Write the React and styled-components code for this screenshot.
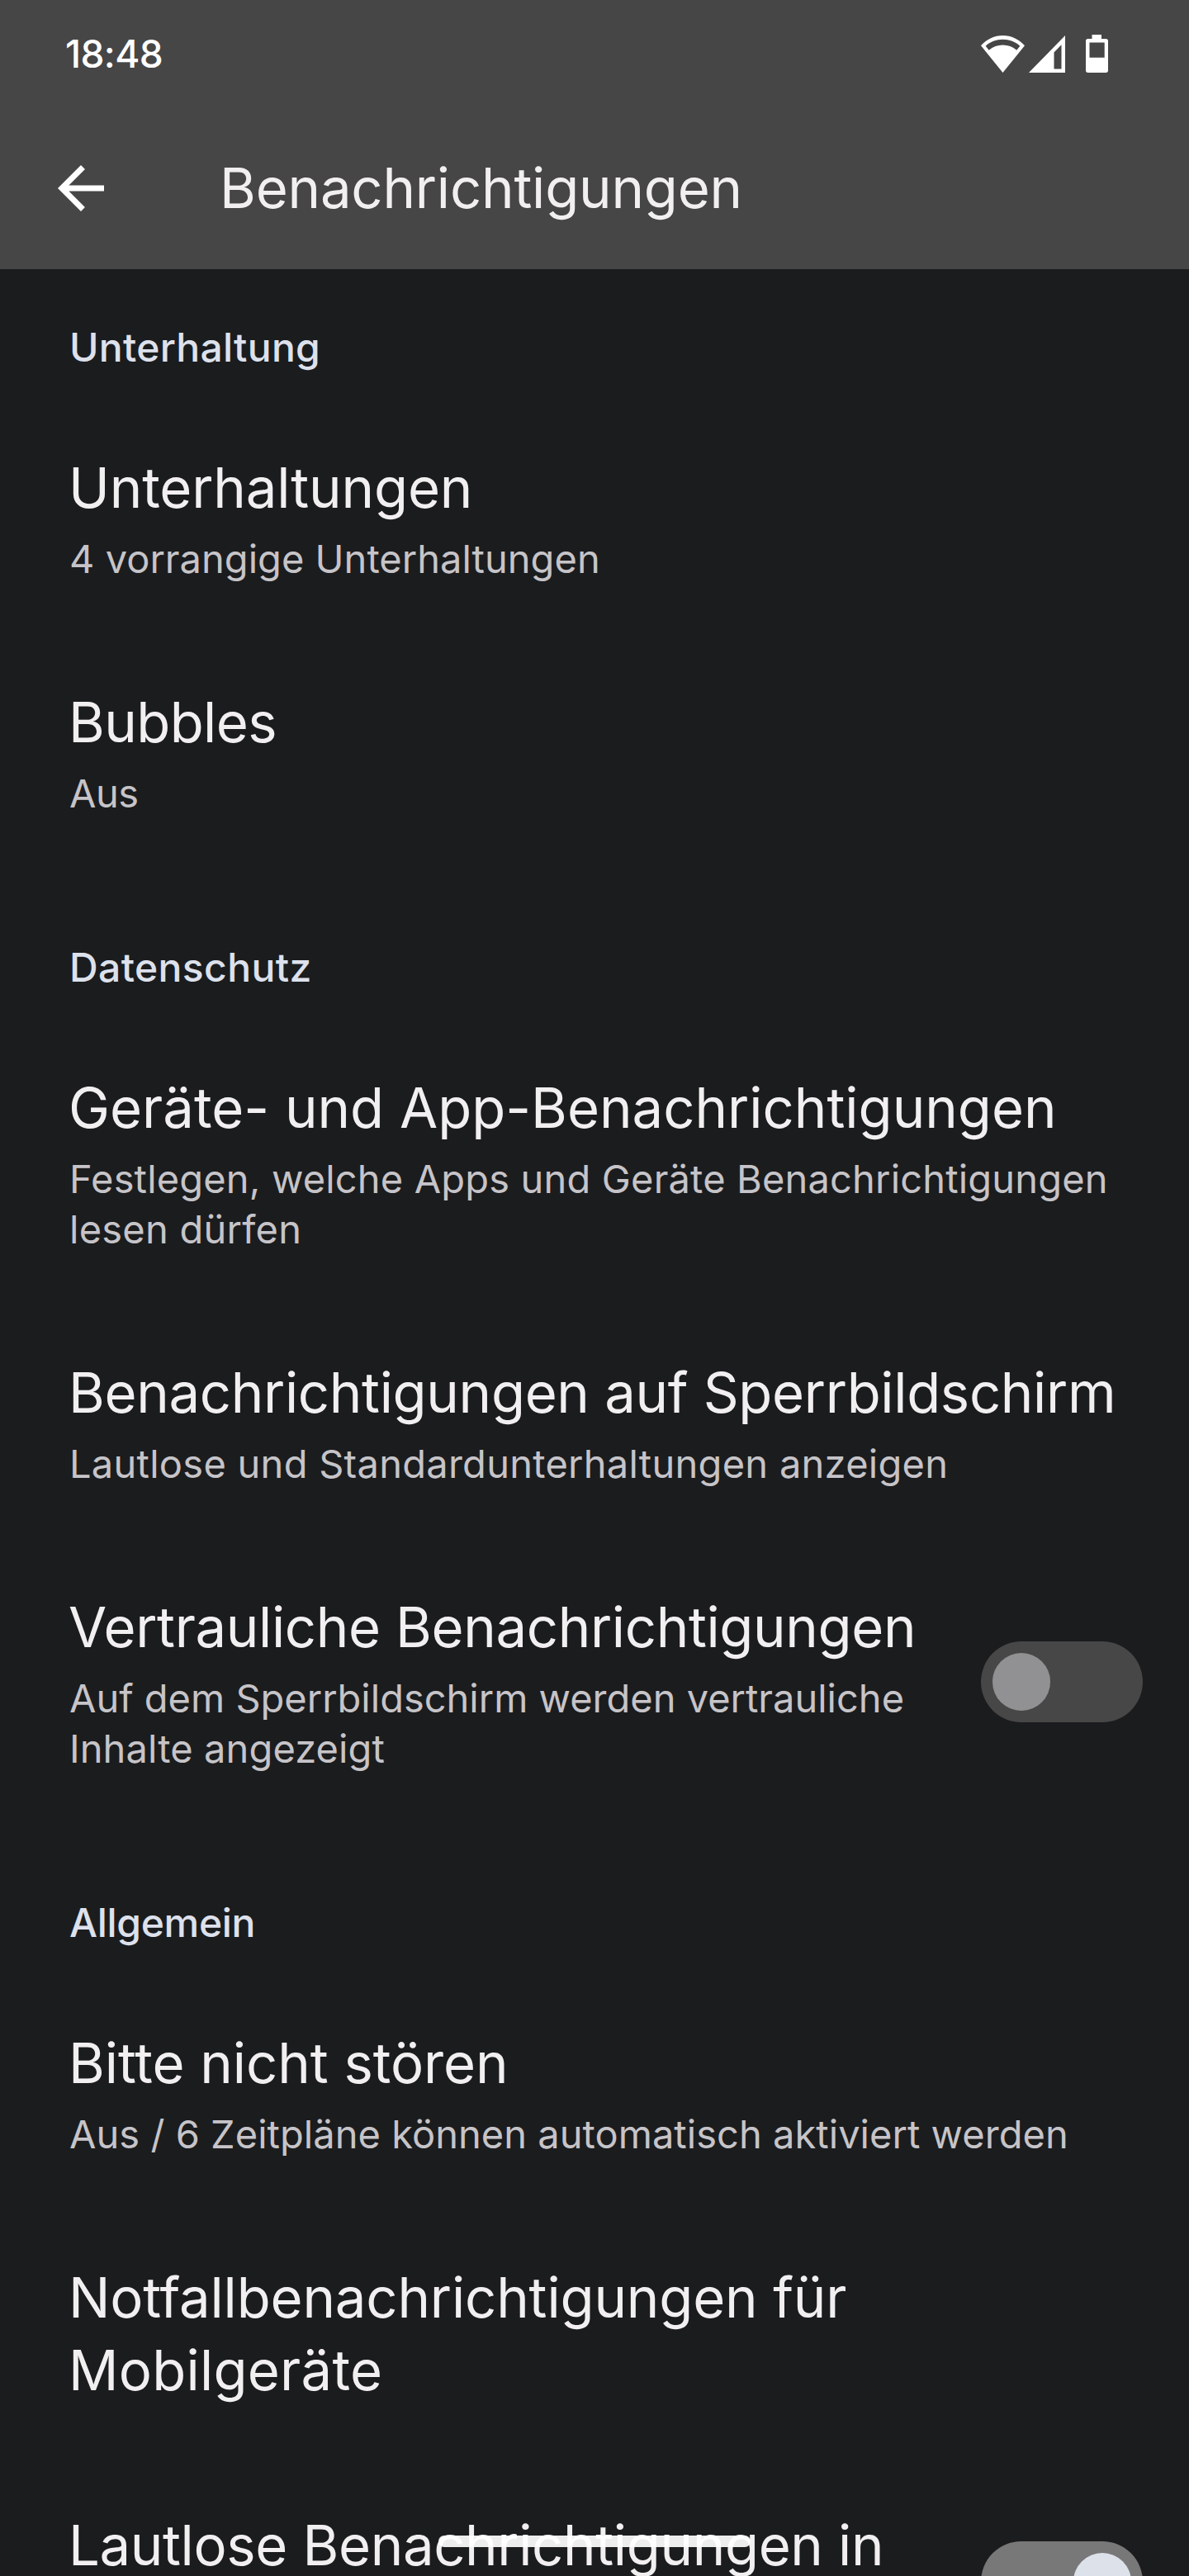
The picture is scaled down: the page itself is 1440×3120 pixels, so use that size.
import React from "react";
import styled, { createGlobalStyle } from "styled-components";

const GlobalStyle = createGlobalStyle`
  *, *::before, *::after { box-sizing: border-box; }
  html, body { margin: 0; background: #1b1c1e; }
`;

const Screen = styled.div`
  position: relative;
  width: 1440px;
  height: 3120px;
  overflow: hidden;
  display: flex;
  flex-direction: column;
  background: #1b1c1e;
  color: #f2eff1;
  font-family: Inter, Roboto, "Liberation Sans", sans-serif;
  font-weight: 400;
`;

const Header = styled.header`
  flex: none;
  height: 326px;
  background: #464646;
`;

const StatusBar = styled.div`
  display: flex;
  justify-content: space-between;
  align-items: flex-start;
  height: 130px;
  padding: 37px 98px 0 79px;
`;

const Clock = styled.div`
  font-size: 46px;
  line-height: 56px;
  font-weight: 500;
  letter-spacing: -0.6px;
  color: #fff;
`;

const StatusIcons = styled.div`
  display: flex;
  align-items: flex-end;
  padding-top: 5px;

  svg { display: block; fill: #fff; }
  svg + svg { margin-left: 5px; }
  svg:last-child { margin-left: 25px; }
`;

const AppBar = styled.div`
  display: flex;
  align-items: center;
  gap: 126px;
  height: 196px;
  padding-left: 56px;
`;

const BackButton = styled.button`
  width: 84px;
  height: 84px;
  padding: 0;
  border: 0;
  background: none;

  svg { display: block; fill: #fff; }
`;

const PageTitle = styled.h1`
  margin: 0;
  font-size: 67px;
  line-height: 88px;
  font-weight: 400;
  letter-spacing: -0.2px;
`;

const List = styled.main`
  flex: none;
  display: flex;
  flex-direction: column;
`;

const SectionLabel = styled.h2`
  margin: 0;
  padding: ${(p) => (p.$first ? 64 : 88)}px 84px 34px;
  font-size: 48px;
  line-height: 61px;
  font-weight: 500;
  letter-spacing: ${(p) => p.$tracking}px;
  color: #dde1ec;
`;

const Row = styled.div`
  display: flex;
  align-items: center;
  justify-content: space-between;
  padding: 61.5px 56px 62.5px 84px;
`;

const RowText = styled.div`
  display: flex;
  flex-direction: column;
  gap: 11px;
  min-height: ${(p) => (p.$tall ? 176 : 0)}px;
`;

const Title = styled.div`
  margin-left: -1px;
  font-size: 67px;
  line-height: 88px;
`;

const Summary = styled.div`
  font-size: 47px;
  line-height: 61px;
  color: #c6c4c8;
`;

const TextLine = styled.div`
  white-space: nowrap;
  letter-spacing: ${(p) => p.$tracking}px;
`;

const Track = styled.div`
  flex: none;
  display: flex;
  align-items: center;
  justify-content: ${(p) => (p.$on ? "flex-end" : "flex-start")};
  width: 196px;
  height: 98px;
  padding: 0 14px;
  border-radius: 49px;
  background: ${(p) => (p.$on ? "#787879" : "#474747")};
`;

const Thumb = styled.div`
  width: 70px;
  height: 70px;
  border-radius: 50%;
  background: ${(p) => (p.$on ? "#dde1ea" : "#919193")};
`;

const HomeHandle = styled.div`
  position: absolute;
  left: 531px;
  bottom: 35px;
  width: 378px;
  height: 14px;
  border-radius: 7px;
  background: rgba(255, 255, 255, 0.92);
`;

const sections = [
  {
    label: "Unterhaltung",
    tracking: 0.3,
    rows: [
      { title: [["Unterhaltungen", -0.15]], summary: [["4 vorrangige Unterhaltungen", 0.03]] },
      { title: [["Bubbles", -0.6]], summary: [["Aus", -0.5]] },
    ],
  },
  {
    label: "Datenschutz",
    tracking: 0.4,
    rows: [
      {
        title: [["Geräte- und App-Benachrichtigungen", 0]],
        summary: [
          ["Festlegen, welche Apps und Geräte Benachrichtigungen", 0.17],
          ["lesen dürfen", 0.25],
        ],
      },
      {
        title: [["Benachrichtigungen auf Sperrbildschirm", -0.33]],
        summary: [["Lautlose und Standardunterhaltungen anzeigen", 0.27]],
      },
      {
        title: [["Vertrauliche Benachrichtigungen", -0.36]],
        summary: [
          ["Auf dem Sperrbildschirm werden vertrauliche", 0],
          ["Inhalte angezeigt", 0.11],
        ],
        toggle: "off",
      },
    ],
  },
  {
    label: "Allgemein",
    tracking: -0.31,
    rows: [
      {
        title: [["Bitte nicht stören", -0.05]],
        summary: [["Aus / 6 Zeitpläne können automatisch aktiviert werden", 0.04]],
      },
      { title: [["Notfallbenachrichtigungen für", -0.16], ["Mobilgeräte", 0.25]] },
      { title: [["Lautlose Benachrichtigungen in", -0.36]], toggle: "on", tall: true },
    ],
  },
];

const Lines = ({ lines }) =>
  lines.map(([text, tracking]) => (
    <TextLine key={text} $tracking={tracking}>
      {text}
    </TextLine>
  ));

const WifiIcon = () => (
  <svg width="53" height="45" viewBox="0 0 53 45">
    <path
      fillRule="evenodd"
      d="M26.5 0C16.3 0 7 4.4 0 12.2L26.5 45 53 12.2C46 4.4 36.7 0 26.5 0ZM26.5 4.8C34.6 4.8 41.700 7.600 47.300 12.700L43.300 17.700C38.500 13.600 32.800 11.500 26.500 11.500S14.500 13.600 9.700 17.700L5.700 12.700C11.300 7.600 18.400 4.800 26.500 4.800Z"
    />
  </svg>
);

const SignalIcon = () => (
  <svg width="44" height="45" viewBox="0 0 44 45">
    <path fillRule="evenodd" d="M44 0V45H0ZM39.500 11.300L30.500 20.500V40.500H39.500Z" />
  </svg>
);

const BatteryIcon = () => (
  <svg width="27" height="46" viewBox="0 0 27 46">
    <path
      fillRule="evenodd"
      d="M7.500 0H19V5H24.300Q27 5 27 7.700V43.300Q27 46 24.300 46H2.700Q0 46 0 43.300V7.700Q0 5 2.700 5H7.500ZM4.500 9.500V27.800H22.700V9.500Z"
    />
  </svg>
);

const Toggle = ({ on }) => (
  <Track $on={on} role="switch" aria-checked={on}>
    <Thumb $on={on} />
  </Track>
);

export default function App() {
  return (
    <Screen>
      <GlobalStyle />
      <Header>
        <StatusBar>
          <Clock>18:48</Clock>
          <StatusIcons>
            <WifiIcon />
            <SignalIcon />
            <BatteryIcon />
          </StatusIcons>
        </StatusBar>
        <AppBar>
          <BackButton>
            <svg width="84" height="84" viewBox="0 0 24 24">
              <path d="M20 11H7.830l5.590-5.590L12 4l-8 8 8 8 1.410-1.410L7.830 13H20v-2z" />
            </svg>
          </BackButton>
          <PageTitle>Benachrichtigungen</PageTitle>
        </AppBar>
      </Header>
      <List>
        {sections.map((section, i) => (
          <React.Fragment key={section.label}>
            <SectionLabel $first={i === 0} $tracking={section.tracking}>
              {section.label}
            </SectionLabel>
            {section.rows.map((row) => (
              <Row key={row.title[0][0]}>
                <RowText $tall={row.tall}>
                  <Title>
                    <Lines lines={row.title} />
                  </Title>
                  {row.summary && (
                    <Summary>
                      <Lines lines={row.summary} />
                    </Summary>
                  )}
                </RowText>
                {row.toggle && <Toggle on={row.toggle === "on"} />}
              </Row>
            ))}
          </React.Fragment>
        ))}
      </List>
      <HomeHandle />
    </Screen>
  );
}
